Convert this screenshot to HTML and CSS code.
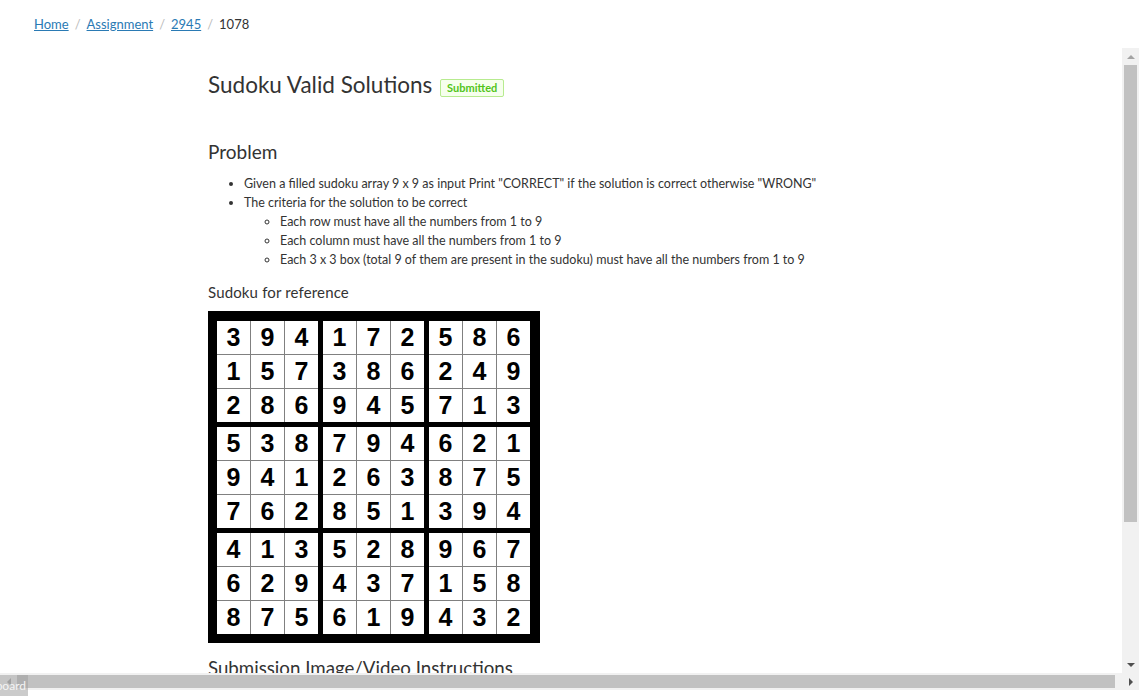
FILE: index.html
```html
<!DOCTYPE html>
<html lang="en">
<head>
<meta charset="utf-8">
<title>Sudoku Valid Solutions</title>
<link rel="stylesheet" href="styles.css">
</head>
<body>
<nav class="crumbs">
  <a href="#">Home</a><span class="sep">/</span>
  <a href="#">Assignment</a><span class="sep">/</span>
  <a href="#">2945</a><span class="sep">/</span>
  <span class="current">1078</span>
</nav>
<div class="frame">
  <div class="viewport">
    <div class="content">
      <h1 class="title">Sudoku Valid Solutions <span class="badge">Submitted</span></h1>
      <h2 class="section">Problem</h2>
      <ul class="list">
        <li>Given a filled sudoku array 9 x 9 as input Print "CORRECT" if the solution is correct otherwise "WRONG"</li>
        <li>The criteria for the solution to be correct
          <ul class="sublist">
            <li>Each row must have all the numbers from 1 to 9</li>
            <li>Each column must have all the numbers from 1 to 9</li>
            <li>Each 3 x 3 box (total 9 of them are present in the sudoku) must have all the numbers from 1 to 9</li>
          </ul>
        </li>
      </ul>
      <p class="caption">Sudoku for reference</p>
      <div class="sudoku">
        <div class="box"><span>3</span><span>9</span><span>4</span><span>1</span><span>5</span><span>7</span><span>2</span><span>8</span><span>6</span></div>
        <div class="box"><span>1</span><span>7</span><span>2</span><span>3</span><span>8</span><span>6</span><span>9</span><span>4</span><span>5</span></div>
        <div class="box"><span>5</span><span>8</span><span>6</span><span>2</span><span>4</span><span>9</span><span>7</span><span>1</span><span>3</span></div>
        <div class="box"><span>5</span><span>3</span><span>8</span><span>9</span><span>4</span><span>1</span><span>7</span><span>6</span><span>2</span></div>
        <div class="box"><span>7</span><span>9</span><span>4</span><span>2</span><span>6</span><span>3</span><span>8</span><span>5</span><span>1</span></div>
        <div class="box"><span>6</span><span>2</span><span>1</span><span>8</span><span>7</span><span>5</span><span>3</span><span>9</span><span>4</span></div>
        <div class="box"><span>4</span><span>1</span><span>3</span><span>6</span><span>2</span><span>9</span><span>8</span><span>7</span><span>5</span></div>
        <div class="box"><span>5</span><span>2</span><span>8</span><span>4</span><span>3</span><span>7</span><span>6</span><span>1</span><span>9</span></div>
        <div class="box"><span>9</span><span>6</span><span>7</span><span>1</span><span>5</span><span>8</span><span>4</span><span>3</span><span>2</span></div>
      </div>
      <h2 class="section sub">Submission Image/Video Instructions</h2>
    </div>
  </div>
  <div class="vscroll">
    <div class="btn"><span class="tri up dim"></span></div>
    <div class="vtrack"><div class="vthumb"></div></div>
    <div class="btn"><span class="tri down"></span></div>
  </div>
  <div class="hscroll">
    <div class="btn"><span class="tri left dim"></span></div>
    <div class="htrack"><div class="hthumb"></div></div>
    <div class="btn"><span class="tri right"></span></div>
  </div>
</div>
<div class="tip"><span>Dashboard</span></div>
</body>
</html>
```
FILE: styles.css
```css
html, body {
  margin: 0;
  padding: 0;
  background: #fff;
  height: 100%;
  overflow: hidden;
}
body {
  font-family: "Segoe UI", Lato, "Noto Sans", sans-serif;
  color: #333;
  position: relative;
}
.crumbs {
  height: 48px;
  display: flex;
  align-items: center;
  padding-left: 34px;
  font-size: 13px;
  box-sizing: border-box;
}
.crumbs a {
  color: #2a7ab4;
  text-decoration: underline;
}
.crumbs .sep {
  color: #bbb;
  margin: 0 6px;
}
.crumbs .current {
  color: #333;
}
.frame {
  display: grid;
  grid-template-columns: 1fr 17px;
  grid-template-rows: 625px 17px;
}
.viewport {
  overflow: hidden;
  background: #fff;
}
.content {
  padding-left: 208px;
}
.title {
  margin: 22px 0 0;
  font-size: 22.5px;
  line-height: 30px;
  font-weight: 400;
  color: #333;
}
.badge {
  display: inline-block;
  vertical-align: 1px;
  font-size: 11px;
  line-height: 16px;
  font-weight: 700;
  color: #52c41a;
  background: #f6ffed;
  border: 1px solid #b7eb8f;
  border-radius: 2px;
  padding: 0 6px;
  margin-left: 2px;
}
.section {
  margin: 39px 0 0;
  font-size: 19px;
  line-height: 26px;
  font-weight: 400;
  color: #333;
}
.list {
  margin: 9px 0 0;
  padding-left: 36px;
  font-size: 12.5px;
  line-height: 19px;
  color: #333;
}
.sublist {
  margin: 0;
  padding-left: 36px;
  list-style: circle;
}
.caption {
  margin: 13px 0 0;
  font-size: 15px;
  line-height: 20px;
  letter-spacing: 0.15px;
}
.sudoku {
  margin-top: 9px;
  width: 332px;
  height: 332px;
  box-sizing: border-box;
  background: #000;
  padding: 10px 10px 9px 9px;
  display: grid;
  grid-template-columns: repeat(3, 101px);
  grid-template-rows: repeat(3, 101px);
  gap: 5px;
}
.box {
  display: grid;
  grid-template-columns: repeat(3, 1fr);
  grid-template-rows: repeat(3, 1fr);
  gap: 1px;
  background: #808080;
}
.box span {
  background: #fff;
  display: flex;
  align-items: center;
  justify-content: center;
  font-family: "Liberation Sans", Arial, sans-serif;
  font-weight: 700;
  font-size: 25px;
  color: #000;
}
.section.sub {
  margin-top: 12px;
  font-size: 18.7px;
}
.vscroll {
  background: #f1f1f1;
  display: flex;
  flex-direction: column;
}
.hscroll {
  grid-column: 1 / 3;
  background: #f1f1f1;
  display: flex;
}
.btn {
  width: 17px;
  height: 17px;
  flex: none;
  display: flex;
  align-items: center;
  justify-content: center;
}
.vtrack {
  flex: 1;
  padding: 0 2px;
}
.vthumb {
  height: 457px;
  background: #c1c1c1;
}
.htrack {
  flex: 1;
  padding: 2px 7px 2px 0;
  display: flex;
}
.hthumb {
  flex: 1;
  background: #c1c1c1;
}
.tri {
  width: 0;
  height: 0;
  border: 4px solid transparent;
}
.tri.up { border-bottom-color: #505050; border-top-width: 0; }
.tri.down { border-top-color: #505050; border-bottom-width: 0; }
.tri.left { border-right-color: #505050; border-left-width: 0; }
.tri.right { border-left-color: #505050; border-right-width: 0; }
.tri.up.dim { border-bottom-color: #a3a3a3; }
.tri.left.dim { border-right-color: #a3a3a3; }
.tip {
  position: absolute;
  left: 0;
  top: 675px;
  width: 28px;
  height: 21px;
  overflow: hidden;
  background: rgba(160, 160, 160, 0.55);
  display: flex;
  justify-content: flex-end;
  align-items: center;
}
.tip span {
  color: #f4f4f4;
  font-size: 12px;
  white-space: nowrap;
  padding-right: 2px;
}
```
